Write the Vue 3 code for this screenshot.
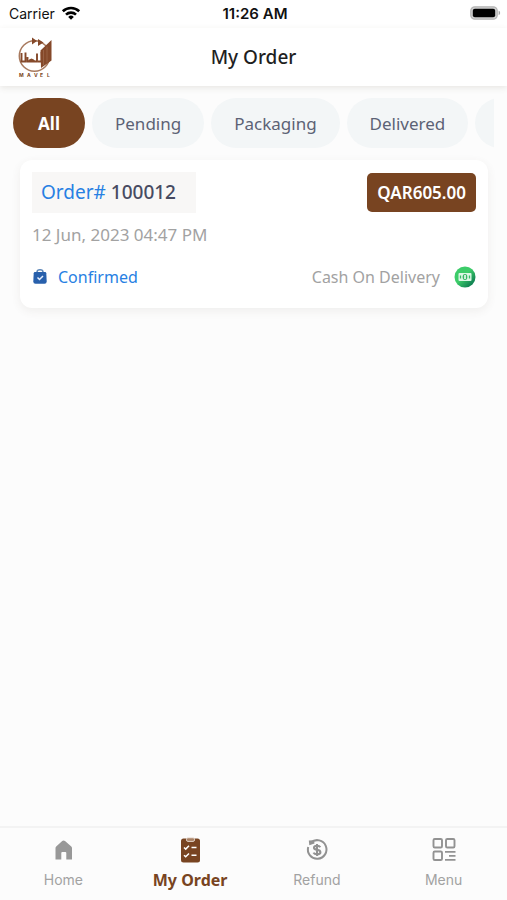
<script setup>
import { ref } from 'vue';

const tabs = ['All', 'Pending', 'Packaging', 'Delivered', 'Cancelled'];
const activeTab = ref('All');

const navItems = [
    { id: 'home', label: 'Home' },
    { id: 'order', label: 'My Order' },
    { id: 'refund', label: 'Refund' },
    { id: 'menu', label: 'Menu' },
];
const activeNav = ref('order');

const orders = [
    {
        id: '100012',
        total: 'QAR605.00',
        date: '12 Jun, 2023 04:47 PM',
        status: 'Confirmed',
        payment: 'Cash On Delivery',
    },
];
</script>

<template>
    <div class="app">
        <div class="status-bar">
            <div class="carrier">
                <span>Carrier</span>
                <svg width="20" height="14" viewBox="0 0 20 14" fill="none" stroke="#000" stroke-width="2.6">
                    <path d="M1.8 5.3a11.8 11.8 0 0 1 16.4 0" />
                    <path d="M5 8.6a7.2 7.2 0 0 1 10 0" />
                    <path d="M10 13.8l-2.8-2.9a4 4 0 0 1 5.6 0z" fill="#000" stroke="none" />
                </svg>
            </div>
            <span class="clock">11:26 AM</span>
            <svg class="battery" width="31" height="14" viewBox="0 0 31 14">
                <rect x=".8" y=".8" width="26.4" height="12.4" rx="4" fill="#d0d0d0" stroke="#b5b5b5" stroke-width="1.3" />
                <rect x="2.8" y="2.8" width="22.4" height="8.4" rx="2" fill="#000" />
                <path d="M28.6 4.8c2 .6 2 3.8 0 4.4z" fill="#a5a5a5" />
            </svg>
        </div>

        <header class="header">
            <svg class="logo" width="36" height="40" viewBox="0 0 36 40">
                <circle cx="16.5" cy="19" r="15.2" fill="none" stroke="#a87a5e" stroke-width="1.5" />
                <path d="M22.500 13.500 33.500 3v20.500L23 31z" fill="#85492a" />
                <path d="M25.500 13v15M29 9.500v16" stroke="#a87a5e" stroke-width=".5" />
                <path d="M14 .5l5 3.500-5 3.500zM20 2l5.500 3.500L20 9z" fill="#85492a" />
                <path d="M3.500 16v8.500h4v-9M9.500 20v4.500h9.500v-8M20 24.500h3.500V15" fill="none" stroke="#85492a" stroke-width="1.900" />
                <path d="M9 25q4.500-7 9 0z" fill="#85492a" />
                <text x="1" y="39.5">M</text>
                <text x="9" y="39.5">A</text>
                <text x="16" y="39.5">V</text>
                <text x="22" y="39.5">E</text>
                <text x="29" y="39.5">L</text>
            </svg>
            <h1>My Order</h1>
        </header>

        <div class="tabs">
            <button
                v-for="tab in tabs"
                :key="tab"
                type="button"
                class="tab"
                :class="{ active: tab === activeTab }"
                @click="activeTab = tab"
            >{{ tab }}</button>
        </div>

        <main class="orders">
            <article v-for="order in orders" :key="order.id" class="card">
                <div class="row">
                    <div class="order-id"><span>Order#</span> {{ order.id }}</div>
                    <div class="total">{{ order.total }}</div>
                </div>
                <div class="date">{{ order.date }}</div>
                <div class="row">
                    <div class="status">
                        <svg width="16" height="16" viewBox="0 0 16 16">
                            <path d="M5 4V3a3 2.200 0 0 1 6 0v1" fill="none" stroke="#5c86b8" stroke-width="1.500" />
                            <path d="M3 3h10q1.200 0 1.300 1.200l.4 8.300q0 2.200-2.200 2.200h-9q-2.200 0-2.200-2.200l.4-8.300Q1.800 3 3 3z" fill="#2860ac" />
                            <path d="M5.500 8.500l2 2 3.500-3.500" fill="none" stroke="#e5efff" stroke-width="1.500" />
                        </svg>
                        <span>{{ order.status }}</span>
                    </div>
                    <div class="payment">
                        <span>{{ order.payment }}</span>
                        <svg width="22" height="22" viewBox="0 0 22 22">
                            <defs>
                                <linearGradient id="cash" x1="0" y1="0" x2="1" y2="1">
                                    <stop offset=".45" stop-color="#3ccc69" />
                                    <stop offset=".8" stop-color="#148754" />
                                </linearGradient>
                            </defs>
                            <circle cx="11" cy="11" r="10.500" fill="url(#cash)" />
                            <rect x="4.500" y="7" width="13" height="8" rx="1" fill="#dcf7e5" />
                            <ellipse cx="11" cy="11" rx="2.400" ry="3" fill="#36b864" />
                            <path d="M6.500 9.500v3M15.500 9.500v3" stroke="#36b864" stroke-width="1.300" />
                            <path d="M11 9v4" stroke="#fff" stroke-width="1.500" />
                        </svg>
                    </div>
                </div>
            </article>
        </main>

        <nav class="bottom-nav">
            <button
                v-for="item in navItems"
                :key="item.id"
                type="button"
                class="nav-item"
                :class="{ active: item.id === activeNav }"
                @click="activeNav = item.id"
            >
                <svg v-if="item.id === 'home'" width="26" height="26" viewBox="0 0 26 26" fill="#989898">
                    <path d="M13.500 3.500q.8 0 1.500.6l6.300 5.400q.7.600.7 1.500v11.500h-5.700V16q0-1-1-1h-3q-1 0-1 1v6.500H5.500V11q0-.9.700-1.500l6-5.400q.6-.6 1.300-.6z" />
                </svg>
                <svg v-else-if="item.id === 'order'" width="26" height="26" viewBox="0 0 26 26">
                    <rect x="4" y="1.500" width="19" height="24" rx="2.500" fill="#784421" />
                    <rect x="9.500" y=".8" width="8" height="3.600" rx="1.400" fill="#a98164" stroke="#f4eee9" stroke-width=".8" />
                    <path d="M7 10.500l1.700 1.600 3.300-3.300M14.500 10.500h5M7 18.200l1.700 1.600 3.300-3.300M14.500 18.200h5" fill="none" stroke="#fff" stroke-width="1.500" />
                </svg>
                <svg v-else-if="item.id === 'refund'" width="26" height="26" viewBox="0 0 26 26" fill="none" stroke="#929292">
                    <path d="M7 5.500A9.300 9.300 0 1 1 4.200 10" stroke-width="2" />
                    <path d="M4.800 3.500l5.200-.2.5 3.200-5.200 1.800z" fill="#929292" stroke="none" />
                    <path d="M16.300 10.300q-.8-1.500-3.300-1.500-3 0-3 2 0 1.600 3 2 3.400.4 3.400 2.400 0 2.100-3.400 2.100-2.700 0-3.500-1.700M13 7v12" stroke-width="2.100" />
                </svg>
                <svg v-else width="26" height="26" viewBox="0 0 26 26" fill="none" stroke="#929292" stroke-width="1.900">
                    <rect x="2.500" y="2" width="8.500" height="8.500" rx="1.300" />
                    <rect x="15" y="2" width="8.500" height="8.500" rx="1.300" />
                    <rect x="2.500" y="14.500" width="8.500" height="8.500" rx="1.300" />
                    <path d="M14 14.800h10.500M18 18.800h6.500M14 22.900h10.500" stroke-width="1.700" />
                </svg>
                <span>{{ item.label }}</span>
            </button>
        </nav>
    </div>
</template>

<style>
body {
    background: #fcfcfc;
}
</style>

<style scoped>
.app {
    display: flex;
    flex-direction: column;
    min-height: 100vh;
    overflow: hidden;
    background: #fcfcfc;
    font-family: "Noto Sans", "Open Sans", sans-serif;
    color: #1f1f1f;
}

.app * {
    box-sizing: border-box;
}

svg {
    display: block;
    flex: none;
}

button {
    border: 0;
    background: none;
    font: inherit;
    cursor: pointer;
}

.status-bar {
    display: grid;
    grid-template-columns: 1fr auto 1fr;
    align-items: center;
    height: 28px;
    padding: 0 6px 2px 9px;
    background: #fff;
    font-family: Inter, sans-serif;
    font-size: 14px;
    color: #111;
}

.carrier {
    display: flex;
    align-items: center;
    gap: 6px;
}

.clock {
    font-size: 15px;
    font-weight: 600;
}

.battery {
    justify-self: end;
}

.header {
    display: grid;
    grid-template-columns: 1fr auto 1fr;
    align-items: center;
    height: 58px;
    padding: 0 18px;
    background: #fff;
    box-shadow: 0 2px 6px rgba(90, 80, 60, 0.12);
}

.logo text {
    font-family: Inter, sans-serif;
    font-size: 5px;
    font-weight: 700;
    fill: #784421;
}

.header h1 {
    margin: 0;
    font-size: 19px;
    font-weight: 500;
}

.tabs {
    display: flex;
    gap: 7px;
    margin: 12px 13px;
    overflow: hidden;
}

.tab {
    flex: none;
    min-width: 72px;
    height: 50px;
    padding: 0 23px;
    border-radius: 25px;
    background: #f3f6f7;
    color: #5c6275;
    font-size: 17px;
}

.tab.active {
    background: #784421;
    color: #fff;
    font-weight: 700;
}

.orders {
    flex: 1;
    padding: 0 19px 0 20px;
}

.card {
    padding: 12px 12px 19px;
    border-radius: 12px;
    background: #fff;
    box-shadow: 0 3px 10px rgba(90, 80, 60, 0.08);
}

.row {
    display: flex;
    align-items: center;
    justify-content: space-between;
}

.order-id {
    padding: 0 20px 0 9px;
    background: #f8f7f6;
    color: #474b61;
    font-size: 19px;
    font-weight: 500;
    line-height: 41px;
}

.order-id span {
    color: #2780e3;
    font-weight: 400;
}

.total {
    padding: 0 10px;
    border-radius: 5px;
    background: #784421;
    color: #fff;
    font-size: 17px;
    font-weight: 600;
    line-height: 39px;
}

.date {
    margin: 10px 0 18px;
    color: #a2a2a2;
    font-size: 17px;
    line-height: 24px;
}

.status,
.payment {
    display: flex;
    align-items: center;
    font-size: 16px;
    line-height: 24px;
}

.status {
    gap: 10px;
    color: #2780e3;
}

.payment {
    gap: 14px;
    color: #a2a2a2;
}

.bottom-nav {
    display: grid;
    grid-template-columns: repeat(4, 1fr);
    height: 74px;
    border-top: 2px solid #f3f3f3;
}

.nav-item {
    display: flex;
    flex-direction: column;
    align-items: center;
    gap: 6px;
    padding: 9px 0 0;
    color: #a2a2a2;
    font-family: Inter, sans-serif;
    font-size: 14px;
    line-height: 22px;
}

.nav-item.active {
    color: #784421;
    font-family: "Noto Sans", "Open Sans", sans-serif;
    font-size: 16px;
    font-weight: 700;
}
</style>
